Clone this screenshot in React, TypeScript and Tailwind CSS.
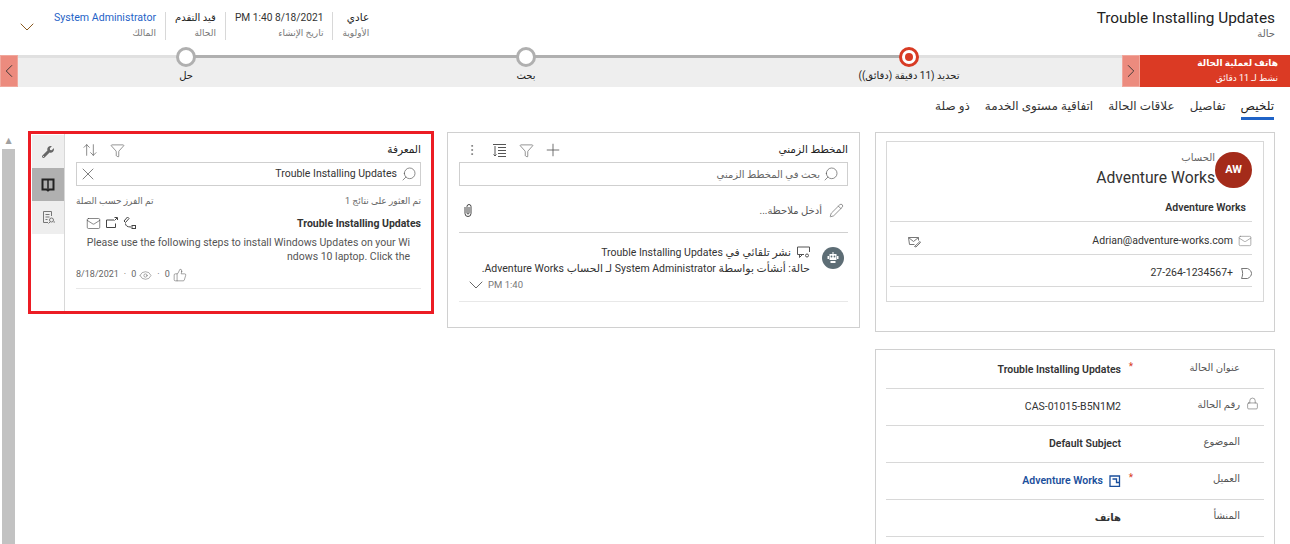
import React from "react";
import {
  ArrowUpDown,
  ChevronDown,
  ChevronLeft,
  ChevronRight,
  Eye,
  Funnel,
  Lock,
  Mail,
  MoreVertical,
  Pencil,
  Plus,
  Search,
  ThumbsUp,
  X,
} from "lucide-react";
import { FaWrench } from "react-icons/fa";

const headerFields = [
  { value: "عادي", label: "الأولوية", cls: "text-[10.5px] text-[#222]" },
  { value: "8/18/2021 1:40 PM", label: "تاريخ الإنشاء", cls: "text-[10.2px] text-[#333]" },
  { value: "قيد التقدم", label: "الحالة", cls: "text-[10px] text-[#222]" },
  { value: "System Administrator", label: "المالك", cls: "text-[10.6px] text-[#1f63c7]" },
];

const formRows = [
  { label: "عنوان الحالة", value: "Trouble Installing Updates", required: true, bold: true },
  { label: "رقم الحالة", value: "CAS-01015-B5N1M2", locked: true },
  { label: "الموضوع", value: "Default Subject", bold: true },
  { label: "العميل", value: "Adventure Works", required: true, link: true, bold: true },
  { label: "المنشأ", value: "هاتف", bold: true, arabic: true },
];

const Latin = ({ children }: { children: React.ReactNode }) => (
  <span className="text-[10.5px]">{children}</span>
);

const BookIcon = () => (
  <svg width="14" height="14" viewBox="0 0 14 14" fill="none" stroke="#222" strokeWidth="2">
    <path d="M1.500 1.500h11v10h-4l-1.500 1-1.500-1h-4z" />
    <path d="M7 2v9" strokeWidth="1.500" />
  </svg>
);

const NotesIcon = () => (
  <svg width="15" height="15" viewBox="0 0 15 15" fill="none" stroke="#777" strokeWidth="1">
    <path d="M10.500 6V1.500h-8v11H7" />
    <path d="M4.500 4.500h4M4.500 7h4M4.500 9.500h2" />
    <circle cx="10.500" cy="10" r="2" />
    <path d="M9 12l-1.500 1.500M12.500 12H14" />
  </svg>
);

const SortLinesIcon = () => (
  <svg width="13" height="13" viewBox="0 0 13 13" fill="none" stroke="#555" strokeWidth="1">
    <path d="M0 .500h13M5 3.500h8M5 6.500h8M5 9.500h8M5 12.500h8" />
    <path d="M2 2v10M.500 10.500L2 12l1.500-1.500" />
  </svg>
);

const ShareNodesIcon = () => (
  <svg width="14" height="14" viewBox="0 0 14 14" fill="none" stroke="#444" strokeWidth="1">
    <path d="M1 5l3.500-4 1.500 1.500-3.500 4z" />
    <path d="M2.500 7.500c0 2.500 2 3.500 5.500 3.500" />
    <rect x="9" y="9.500" width="3.500" height="3" />
  </svg>
);

const OpenBoxIcon = () => (
  <svg width="12" height="12" viewBox="0 0 12 12" fill="none" stroke="#444" strokeWidth="1">
    <path d="M8 3H.5v7.500h9V6.500" />
    <path d="M8.500 3.500L11 1M8.500.500H11.500V3" />
  </svg>
);

const EmailSendIcon = () => (
  <svg width="13" height="13" viewBox="0 0 13 13" fill="none" stroke="#777" strokeWidth="1">
    <path d="M.5 2.500h10v3M.5 2.500l1 7h5M.5 2.500l5 4 5-4" />
    <path d="M6.500 11.500l5.500-5 .5 1-4.500 4.500z" />
  </svg>
);

const PhoneTagIcon = () => (
  <svg width="11" height="13" viewBox="0 0 11 13" fill="none" stroke="#777" strokeWidth="1">
    <path d="M.5 1.500h6c2.500 1 4 3 4 5s-1.500 4-4 5h-6c1.500-3 1.500-7 0-10z" />
  </svg>
);

const PaperclipIcon = () => (
  <svg width="8" height="13" viewBox="0 0 8 13" fill="none" stroke="#444" strokeWidth="1">
    <path d="M1 3v6.500a3 3 0 0 0 6 0V2.500a2 2 0 0 0-4 0V9a1 1 0 0 0 2 0V3" />
  </svg>
);

const PostIcon = () => (
  <svg width="13" height="13" viewBox="0 0 13 13" fill="none" stroke="#555" strokeWidth="1">
    <path d="M7 8.500H.5v-7.500h12v5" />
    <path d="M2.500 8.500v3l3-3" />
    <circle cx="10" cy="9.500" r="1.500" />
  </svg>
);

const BotIcon = () => (
  <svg width="12" height="12" viewBox="0 0 12 12" fill="#fff">
    <path d="M5.500 0h1v2h3v6h-7V2h3z" />
    <rect x="0.500" y="4" width="1.500" height="3" />
    <rect x="10" y="4" width="1.500" height="3" />
    <rect x="3.500" y="9" width="5" height="2" />
    <circle cx="4.500" cy="4.500" r="0.900" fill="#5d6d75" />
    <circle cx="7.500" cy="4.500" r="0.900" fill="#5d6d75" />
  </svg>
);

const AccountLinkIcon = () => (
  <svg width="12" height="12" viewBox="0 0 12 12" fill="none" stroke="#1b4f9c" strokeWidth="1.300">
    <path d="M1 1h9.500v10.500H1z" />
    <path d="M3.500 4h4v3.500H11" />
  </svg>
);

const Stage = ({ label, width, active }: { label: string; width: string; active?: boolean }) => (
  <div className={`flex flex-col items-center shrink-0 ${width}`}>
    <div
      className={`relative -mt-[8px] flex h-[20px] w-[20px] items-center justify-center rounded-full border-[3px] ${
        active ? "border-[#d83b24] bg-white" : "border-[#b0b0b0] bg-white"
      }`}
    >
      {active && <div className="h-[8px] w-[8px] rounded-full bg-[#d83b24]" />}
    </div>
    <div className="mt-[1px] whitespace-nowrap text-[10px] leading-[16px] text-[#222]">{label}</div>
  </div>
);

const App = () => {
  return (
    <div
      dir="rtl"
      className="h-[544px] w-[1290px] overflow-hidden bg-white [font-family:'Roboto','DejaVu_Sans',sans-serif] text-[11px] text-[#333]"
    >
      {/* رأس الصفحة */}
      <header className="flex h-[55px] items-start justify-between pr-[15px] pl-[15px] pt-[9px]">
        <div>
          <div className="text-[15.4px] leading-[18px] text-[#222]">Trouble Installing Updates</div>
          <div className="text-[10px] leading-[14px] text-[#666]">حالة</div>
        </div>
        <div className="-mt-[1px] flex items-center">
          <div className="flex pt-[4px]">
            {headerFields.map((f, i) => (
              <div
                key={f.label}
                className={`flex h-[28px] flex-col pl-[9px] ${i > 0 ? "border-r border-[#d8d8d8] pr-[9px]" : ""} ${
                  i === headerFields.length - 1 ? "pl-0" : ""
                }`}
              >
                <div className={`whitespace-nowrap leading-[12px] ${f.cls}`}>{f.value}</div>
                <div className="mt-[2px] whitespace-nowrap text-[9px] leading-[14px] text-[#777]">{f.label}</div>
              </div>
            ))}
          </div>
          <ChevronDown size={24} strokeWidth={1} className="mr-[6px] mt-[6px] text-[#8a5a20]" />
        </div>
      </header>

      {/* شريط مراحل العملية */}
      <div className="flex h-[32px]">
        <div className="w-[150px] shrink-0 bg-[#db3a24] pr-[12px] pt-[1px] text-white">
          <div className="text-[9px] font-bold leading-[15px]">هاتف لعملية الحالة</div>
          <div className="text-[9px] leading-[15px]">نشط لـ 11 دقائق</div>
        </div>
        <div className="flex w-[18px] shrink-0 items-center justify-center overflow-hidden border border-[#f0a79c] bg-[#ec8b7e]">
          <ChevronRight size={22} strokeWidth={1} className="shrink-0 text-[#333]" />
        </div>
        <div className="relative flex min-w-0 flex-1 bg-[#eeeeee]">
          <div className="absolute inset-x-0 top-0 h-[3px] bg-[#e0e0e0]" />
          <div className="absolute left-[168px] top-0 h-[3px] w-[723px] bg-[#b0b0b0]" />
          <Stage label="تحديد (11 دقيقة (دقائق))" width="w-[426px]" active />
          <Stage label="بحث" width="w-[340px]" />
          <Stage label="حل" width="w-[340px] -ml-[2px]" />
        </div>
        <div className="relative z-10 flex w-[18px] shrink-0 items-center justify-center overflow-hidden border border-[#f0a79c] bg-[#ec8b7e]">
          <ChevronLeft size={22} strokeWidth={1} className="shrink-0 text-[#333]" />
        </div>
      </div>

      {/* علامات التبويب */}
      <nav className="flex h-[45px] gap-[15px] pr-[16px] pt-[11px] text-[12px] text-[#333]">
        <div className="h-[22px] border-b-[3px] border-[#1f63c7] leading-[17px] text-[#222]">تلخيص</div>
        <div className="leading-[17px]">تفاصيل</div>
        <div className="leading-[17px]">علاقات الحالة</div>
        <div className="leading-[17px]">اتفاقية مستوى الخدمة</div>
        <div className="leading-[17px]">ذو صلة</div>
      </nav>

      <main className="flex items-start pr-[15px]">
        {/* العمود الأول */}
        <div className="flex w-[400px] shrink-0 flex-col gap-[17px]">
          <section className="h-[200px] border border-[#d0d0d0] px-[10px] pt-[8px]">
            <div className="h-[161px] border border-[#d8d8d8] pl-[3px] pr-[11px] pt-[10px]">
              <div className="flex h-[39px]">
                <div className="flex h-[36px] w-[37px] shrink-0 items-center justify-center rounded-full bg-[#a42b1a] text-[11px] font-bold text-white">
                  AW
                </div>
                <div>
                  <div className="text-[10px] leading-[12px] text-[#666]">الحساب</div>
                  <div className="mt-[4px] text-[15.7px] leading-[20px] text-[#333]">Adventure Works</div>
                </div>
              </div>
              <div className="h-[31px] border-b border-[#d8d8d8] pr-[6px] pt-[10px] text-[10.5px] font-semibold leading-[14px] text-[#333]">
                Adventure Works
              </div>
              <div className="flex h-[33px] items-center justify-between border-b border-[#d8d8d8] pl-[18px] pt-[6px]">
                <div className="flex items-center gap-[5px]">
                  <Mail size={14} strokeWidth={1} className="text-[#777]" />
                  <span className="text-[10.5px]">Adrian@adventure-works.com</span>
                </div>
                <EmailSendIcon />
              </div>
              <div className="flex h-[32px] items-center gap-[8px] border-b border-[#d8d8d8] pt-[5px]">
                <PhoneTagIcon />
                <span dir="ltr" className="text-[10.5px]">27-264-1234567+</span>
              </div>
            </div>
          </section>

          <section className="h-[200px] border border-[#d0d0d0] px-[10px] pt-[2px]">
            {formRows.map((row) => (
              <div key={row.label} className="flex h-[37px] border-b border-[#d8d8d8] pt-[6px]">
                <div className="flex w-[24px] shrink-0 justify-center pt-[2px]">
                  {row.locked && <Lock size={13} strokeWidth={1} className="text-[#555]" />}
                </div>
                <div className="mt-[1px] w-[104px] shrink-0 text-[10px] leading-[18px] text-[#555]">{row.label}</div>
                <div className="mt-[1px] w-[15px] shrink-0 pr-[3px] text-[10px] leading-[16px] text-[#d83b24]">{row.required ? "*" : ""}</div>
                <div
                  className={`flex items-start gap-[6px] pt-[4px] leading-[16px] ${row.arabic ? "text-[10px]" : "text-[10.5px]"} ${
                    row.bold ? "font-semibold" : ""
                  } ${row.link ? "text-[#1b4f9c]" : "text-[#333]"}`}
                >
                  {row.link && <span className="pt-[2px]"><AccountLinkIcon /></span>}
                  <span>{row.value}</span>
                </div>
              </div>
            ))}
          </section>
        </div>

        {/* الخط الزمني */}
        <section className="mr-[15px] h-[196px] w-[413px] shrink-0 border border-[#d0d0d0] px-[11px] pt-[5px]">
          <div className="flex h-[24px] items-center justify-between">
            <div className="text-[10.500px] text-[#222]">المخطط الزمني</div>
            <div className="flex items-center gap-[7px] pl-[3px] text-[#555]">
              <span className="flex w-[20px] justify-center"><Plus size={20} strokeWidth={1} /></span>
              <span className="flex w-[20px] justify-center"><Funnel size={15} strokeWidth={1} /></span>
              <span className="flex w-[20px] justify-center"><SortLinesIcon /></span>
              <span className="flex w-[20px] justify-center"><MoreVertical size={14} strokeWidth={1} /></span>
            </div>
          </div>
          <div className="flex h-[24px] items-center gap-[3px] border border-[#cfcfcf] pr-[8px]">
            <Search size={16} strokeWidth={1} className="-scale-x-100 text-[#555]" />
            <span className="text-[10px] text-[#666]">بحث في المخطط الزمني</span>
          </div>
          <div className="flex h-[47px] items-center justify-between border-b border-[#d0d0d0] pl-[5px] pr-[4px] pt-[3px]">
            <div className="flex items-center gap-[7px] text-[10px] text-[#555]">
              <Pencil size={15} strokeWidth={1} />
              <span>أدخل ملاحظة...</span>
            </div>
            <PaperclipIcon />
          </div>
          <div className="flex h-[69px] border-b border-[#e8e8e8] pl-[5px] pr-[4px] pt-[13px]">
            <div className="mt-[1px] flex h-[22px] w-[22px] shrink-0 items-center justify-center rounded-full bg-[#5d6d75]">
              <BotIcon />
            </div>
            <div className="min-w-0 flex-1 pr-[12px] -mt-[1px]">
              <div className="flex h-[15px] items-center gap-[6px] text-[10.8px] leading-[15px] text-[#333]">
                <PostIcon />
                <span>نشر تلقائي في <Latin>Trouble Installing Updates</Latin></span>
              </div>
              <div className="mt-[1px] whitespace-nowrap text-[10.8px] leading-[15px] text-[#333]">
                حالة: أنشأت بواسطة <Latin>System Administrator</Latin> لـ الحساب <Latin>Adventure Works.</Latin>
              </div>
              <div className="flex h-[18px] items-center justify-end text-[9.5px] text-[#777]">
                <span>1:40 PM</span>
                <ChevronDown size={24} strokeWidth={1} className="shrink-0 text-[#666]" />
              </div>
            </div>
          </div>
        </section>

        {/* المعرفة */}
        <section className="mr-[13px] -mt-[1px] flex h-[183px] w-[406px] shrink-0 border-[3px] border-[#ec1c24] pl-[1px]">
          <div className="min-w-0 flex-1 pl-[11px] pr-[10px] pt-[4px]">
            <div className="flex h-[24px] items-center justify-between">
              <div className="text-[10.500px] text-[#222]">المعرفة</div>
              <div className="flex items-center gap-[7px] pl-[4px] text-[#555]">
                <span className="flex w-[20px] justify-center"><Funnel size={15} strokeWidth={1} /></span>
                <span className="flex w-[20px] justify-center"><ArrowUpDown size={16} strokeWidth={1} /></span>
              </div>
            </div>
            <div className="flex h-[24px] items-center justify-between border border-[#cfcfcf] pl-[1px] pr-[3px]">
              <div className="flex items-center gap-[4px]">
                <Search size={16} strokeWidth={1} className="-scale-x-100 text-[#555]" />
                <span className="text-[10.5px] text-[#333]">Trouble Installing Updates</span>
              </div>
              <X size={20} strokeWidth={1} className="text-[#666]" />
            </div>
            <div className="mt-[8px] flex justify-between text-[9px] leading-[14px] text-[#666]">
              <span>تم العثور على نتائج 1</span>
              <span>تم الفرز حسب الصلة</span>
            </div>
            <div className="mt-[8px] flex h-[16px] items-center justify-between pl-[10px]">
              <div className="text-[10.5px] font-bold text-[#333]">Trouble Installing Updates</div>
              <div className="-mt-[2px] flex items-center gap-[5px]">
                <ShareNodesIcon />
                <OpenBoxIcon />
                <Mail size={15} strokeWidth={1} className="text-[#444]" />
              </div>
            </div>
            <div dir="ltr" className="mt-[4px] whitespace-nowrap pr-[11px] text-right text-[10.5px] leading-[14px] text-[#555]">
              Please use the following steps to install Windows Updates on your Wi
              <br />
              ndows 10 laptop. Click the
            </div>
            <div className="mt-[4px] flex h-[21px] items-start border-b border-[#e8e8e8]" dir="ltr">
              <div className="flex items-center gap-[5px] text-[9px] text-[#666]">
                <span>8/18/2021</span>
                <span>·</span>
                <span>0</span>
                <Eye size={13} strokeWidth={1} className="-ml-[2px]" />
                <span>·</span>
                <span>0</span>
                <ThumbsUp size={14} strokeWidth={1} className="-ml-[2px]" />
              </div>
            </div>
          </div>
          <aside className="w-[33px] shrink-0 border-r border-[#d8d8d8] pt-[1px]">
            <div className="flex h-[33px] items-center justify-center bg-[#eeeeee]">
              <FaWrench size={12} className="text-[#666]" />
            </div>
            <div className="flex h-[33px] items-center justify-center bg-[#b0b0b0]">
              <BookIcon />
            </div>
            <div className="flex h-[33px] items-center justify-center bg-[#eeeeee]">
              <NotesIcon />
            </div>
          </aside>
        </section>

        {/* شريط التمرير */}
        <div className="mr-[13px] flex h-[412px] w-[13px] shrink-0 flex-col items-center">
          <div className="flex h-[17px] items-center text-[8px] text-[#a0a0a0]">▲</div>
          <div className="w-full flex-1 bg-[#c2c2c2]" />
        </div>
      </main>
    </div>
  );
};

export default App;
